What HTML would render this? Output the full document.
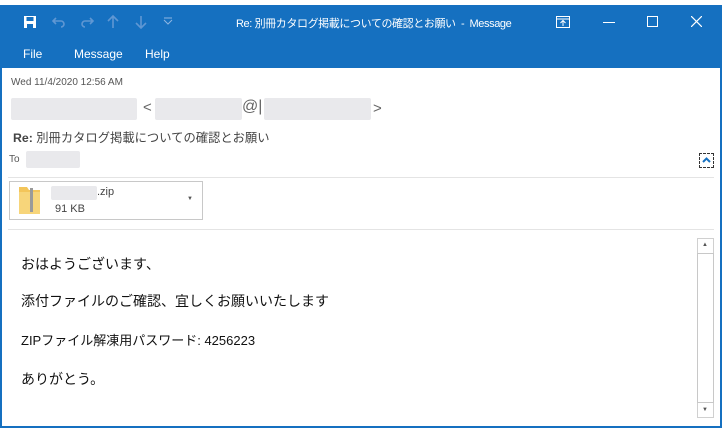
<!DOCTYPE html>
<html><head><meta charset="utf-8"><style>
*{margin:0;padding:0;box-sizing:border-box}
body{width:724px;height:431px;background:#fff;position:relative;overflow:hidden;font-family:"Liberation Sans","Noto Sans CJK JP",sans-serif}
.abs{position:absolute}
.t{position:absolute;font-size:12px;white-space:nowrap}
.blur{position:absolute;background:#e9e9ec;border-radius:2px}
</style></head><body>
<div class="abs" style="left:0;top:5px;width:722px;height:63px;background:#1570c0"></div>
<div class="abs" style="left:0;top:68px;width:2px;height:360px;background:#1570c0"></div>
<div class="abs" style="left:720px;top:68px;width:2px;height:360px;background:#1570c0"></div>
<div class="abs" style="left:0;top:426px;width:722px;height:2px;background:#1570c0"></div>
<div style="color:#fff">
 <svg class="abs" style="left:23px;top:15px" width="14" height="14" viewBox="0 0 14 14"><rect x="1" y="1" width="12" height="12" fill="#fff"/><rect x="3.5" y="2" width="7" height="4" fill="#1570c0"/><rect x="4" y="9" width="6" height="4" fill="#1570c0"/></svg>
 <svg class="abs" style="left:50px;top:13px" width="130" height="18" fill="none" stroke="#5f97d3" stroke-width="1.6"><path d="M6 5L3 8 6 11M3 8h8a3 3 0 0 1 0 6"/><path d="M40 5L43 8 40 11M43 8h-8a3 3 0 0 0 0 6"/><path d="M63 15V3M58 8L63 3 68 8"/><path d="M91 3V15M86 10L91 15 96 10"/><path d="M114 7L118 11 122 7M114 5h8" stroke="#8fb6e2" stroke-width="1"/></svg>
 <div class="t" style="left:236px;top:15px;font-size:11px;letter-spacing:-0.4px">Re: 別冊カタログ掲載についての確認とお願い&nbsp; - &nbsp;Message</div>
 <svg class="abs" style="left:556px;top:16px" width="14" height="12"><rect x="0.5" y="0.5" width="13" height="11" fill="none" stroke="#fff"/><line x1="0" y1="3" x2="14" y2="3" stroke="#fff"/><path d="M7 10V5M4.5 7L7 4.5 9.5 7" stroke="#fff" fill="none"/></svg>
 <div class="abs" style="left:603px;top:22px;width:12px;height:1px;background:#fff"></div>
 <div class="abs" style="left:647px;top:16px;width:11px;height:11px;border:1px solid #fff"></div>
 <svg class="abs" style="left:691px;top:16px" width="11" height="11"><path d="M0 0L11 11M11 0L0 11" stroke="#fff" stroke-width="1.2"/></svg>
 <div class="t" style="left:23px;top:47px">File</div>
 <div class="t" style="left:74px;top:47px">Message</div>
 <div class="t" style="left:145px;top:47px">Help</div>
</div>
<div class="t" style="left:11px;top:77px;font-size:10px;color:#555">Wed 11/4/2020 12:56 AM</div>
<div class="blur" style="left:11px;top:98px;width:126px;height:22px"></div>
<div class="t" style="left:143px;top:99px;font-size:15px;color:#666">&lt;</div>
<div class="blur" style="left:155px;top:98px;width:87px;height:22px"></div>
<div class="t" style="left:242px;top:98px;font-size:16px;color:#666">@|</div>
<div class="blur" style="left:264px;top:98px;width:107px;height:22px"></div>
<div class="t" style="left:373px;top:100px;font-size:15px;color:#666">&gt;</div>
<div class="t" style="left:13px;top:128px;font-size:12.3px;color:#444"><b>Re:</b> 別冊カタログ掲載についての確認とお願い</div>
<div class="t" style="left:9px;top:154px;font-size:10px;color:#555">To</div>
<div class="blur" style="left:26px;top:151px;width:54px;height:17px"></div>
<div class="abs" style="left:699px;top:153px;width:15px;height:15px;border:1px dashed #333"><svg width="13" height="13"><path d="M3 8L6.5 4.5 10 8" stroke="#1570c0" stroke-width="2" fill="none"/></svg></div>
<div class="abs" style="left:8px;top:177px;width:706px;height:1px;background:#e4e4e4"></div>
<div class="abs" style="left:9px;top:181px;width:194px;height:39px;border:1px solid #c8c8c8"></div>
<svg class="abs" style="left:19px;top:186px" width="23" height="29"><path d="M0 1h8l2 3h11v24H0z" fill="#f3c55a"/><rect x="0" y="6" width="21" height="22" fill="#f7d57a"/><rect x="11" y="2" width="3" height="24" fill="#9a9a9a"/></svg>
<div class="blur" style="left:51px;top:186px;width:46px;height:14px"></div>
<div class="t" style="left:97px;top:186px;font-size:11px;color:#444">.zip</div>
<div class="t" style="left:55px;top:203px;font-size:11px;color:#444">91 KB</div>
<div class="t" style="left:187px;top:196px;font-size:6px;color:#555">▼</div>
<div class="abs" style="left:8px;top:229px;width:706px;height:1px;background:#e4e4e4"></div>
<div class="t" style="left:21px;top:254px;font-size:14px;color:#111">おはようございます、</div>
<div class="t" style="left:21px;top:291px;font-size:14px;color:#111">添付ファイルのご確認、宜しくお願いいたします</div>
<div class="t" style="left:21px;top:330px;font-size:13px;color:#111">ZIPファイル解凍用パスワード: 4256223</div>
<div class="t" style="left:21px;top:369px;font-size:14px;color:#111">ありがとう。</div>
<div class="abs" style="left:697px;top:238px;width:17px;height:180px;border:1px solid #d0d0d0"></div>
<div class="abs" style="left:697px;top:253px;width:17px;height:150px;border:1px solid #c8c8c8"></div>
<div class="t" style="left:702px;top:242px;font-size:6px;color:#555">▲</div>
<div class="t" style="left:702px;top:407px;font-size:6px;color:#555">▼</div>
</body></html>
